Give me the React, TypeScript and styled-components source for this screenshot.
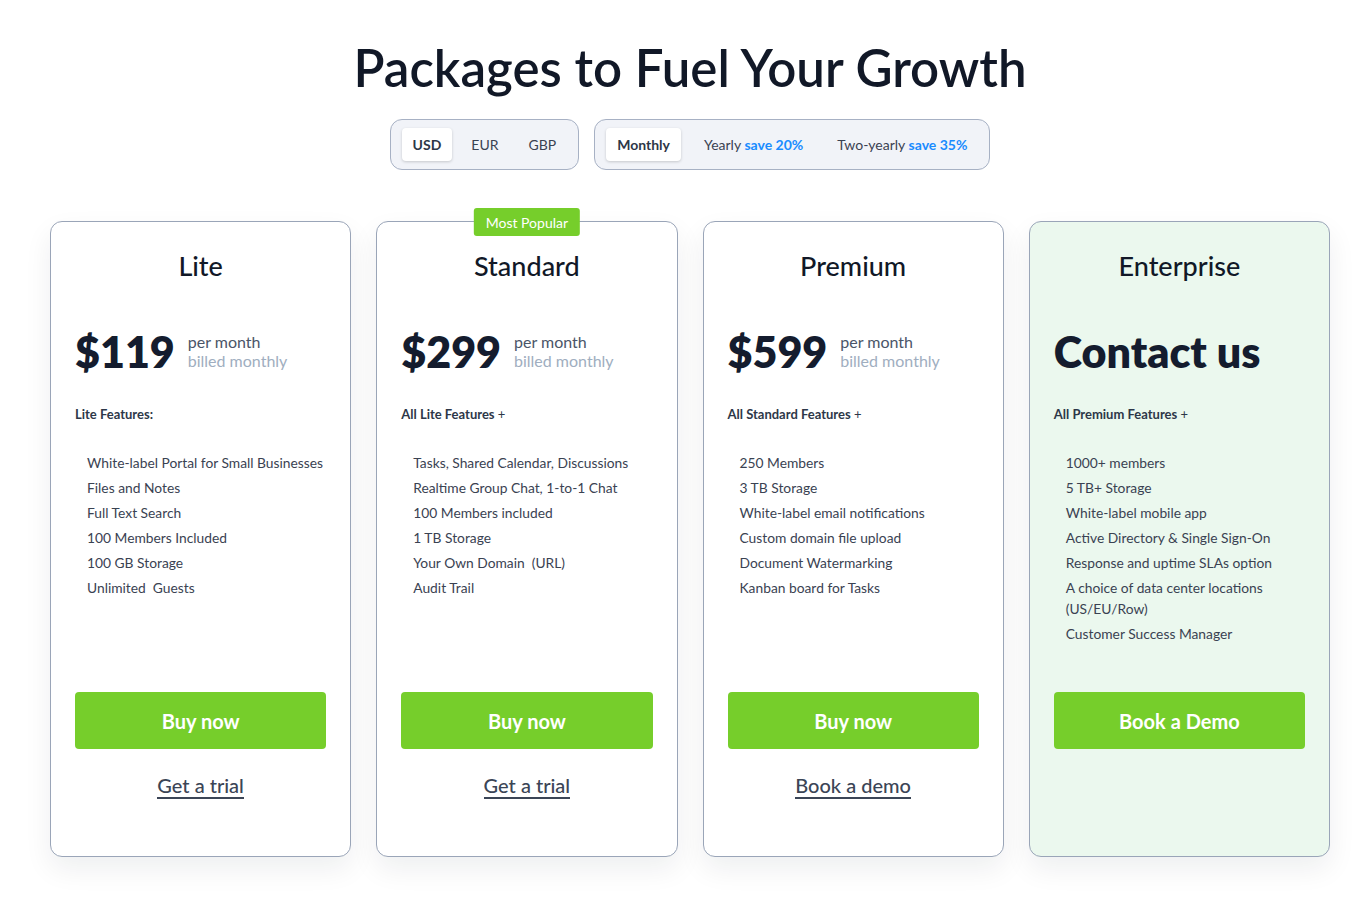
import React from 'react';
import styled, { createGlobalStyle } from 'styled-components';

const GlobalStyle = createGlobalStyle`
	* { box-sizing: border-box; }
	body {
		margin: 0;
		background: #ffffff;
		font-family: Lato, "Noto Sans", sans-serif;
		color: #111827;
	}
`;

const Page = styled.div`
	width: 1280px;
	margin: 0 0 0 50px;
	padding: 37px 0 40px;
	display: flex;
	flex-direction: column;
	align-items: center;
`;

const Heading = styled.h1`
	margin: 0;
	font-size: 51px;
	line-height: 62px;
	font-weight: 600;
	color: #111827;
`;

const Toggles = styled.div`
	display: flex;
	gap: 15px;
	margin-top: 20px;
`;

const ToggleGroup = styled.div<{ $gap: number }>`
	display: flex;
	align-items: center;
	gap: ${({ $gap }) => $gap}px;
	height: 51px;
	padding: 0 11px;
	border: 1px solid #a7b1c4;
	border-radius: 12px;
	background: #f1f3f8;
`;

const ToggleItem = styled.div<{ $active?: boolean }>`
	display: flex;
	align-items: center;
	height: 33px;
	padding: 0 11px;
	border-radius: 4px;
	font-size: 14px;
	font-weight: ${({ $active }) => ($active ? 700 : 400)};
	color: ${({ $active }) => ($active ? '#2d3748' : '#3a4252')};
	background: ${({ $active }) => ($active ? '#ffffff' : 'transparent')};
	box-shadow: ${({ $active }) => ($active ? '0 1px 3px rgba(0,0,0,0.18)' : 'none')};
	white-space: pre;
`;

const Save = styled.span`
	color: #1a8cff;
	font-weight: 700;
`;

const Cards = styled.div`
	display: grid;
	grid-template-columns: repeat(4, 1fr);
	gap: 25px;
	width: 100%;
	margin-top: 51px;
`;

const Card = styled.div<{ $tint?: boolean }>`
	position: relative;
	display: flex;
	flex-direction: column;
	padding: 24px;
	border: 1px solid #9aa5b8;
	border-radius: 12px;
	background: ${({ $tint }) => ($tint ? '#ebf8ee' : '#ffffff')};
	box-shadow: 0 12px 28px rgba(15, 23, 42, 0.07);
`;

const Badge = styled.div`
	position: absolute;
	top: -14px;
	left: 50%;
	transform: translateX(-50%);
	height: 28px;
	padding: 0 12px;
	display: flex;
	align-items: center;
	border-radius: 3px;
	background: #76ce2b;
	color: #ffffff;
	font-size: 14px;
	white-space: nowrap;
`;

const PlanName = styled.h2`
	margin: 0;
	text-align: center;
	font-size: 27px;
	line-height: 40px;
	font-weight: 500;
	color: #111827;
`;

const PriceRow = styled.div`
	display: flex;
	align-items: center;
	gap: 13px;
	height: 44px;
	margin-top: 44px;
`;

const Price = styled.div`
	font-size: 43px;
	font-weight: 800;
	line-height: 44px;
	color: #141c2e;
`;

const Period = styled.div`
	display: flex;
	flex-direction: column;
	font-size: 16px;
	line-height: 19px;
	color: #4a5568;
	margin-top: -3px;
`;

const Billed = styled.span`
	color: #a0aec0;
`;

const FeatureHead = styled.div`
	margin-top: 30px;
	font-size: 13px;
	line-height: 20px;
	font-weight: 700;
	color: #2d3748;
`;

const Plus = styled.span`
	font-weight: 400;
`;

const FeatureList = styled.ul`
	flex: 1;
	list-style: none;
	margin: 28px 0 44px;
	padding: 0 0 0 12px;
`;

const Feature = styled.li`
	font-size: 13.8px;
	line-height: 21px;
	margin-bottom: 4px;
	color: #3a4252;
	white-space: pre-wrap;
`;

const BuyButton = styled.button`
	height: 57px;
	border: none;
	border-radius: 4px;
	background: #76ce2b;
	color: #ffffff;
	font-family: inherit;
	font-size: 20px;
	font-weight: 700;
	cursor: pointer;
`;

const LinkWrap = styled.div`
	display: flex;
	justify-content: center;
	height: 28px;
	margin-top: 22px;
	margin-bottom: 33px;
`;

const TextLink = styled.a`
	font-size: 20px;
	line-height: 28px;
	font-weight: 500;
	color: #3b4556;
	text-decoration: none;
	border-bottom: 2px solid #3b4556;
`;

type Plan = {
	name: string;
	price?: string;
	head: string;
	plus?: boolean;
	features: string[];
	cta: string;
	link?: string;
	popular?: boolean;
	tint?: boolean;
};

const plans: Plan[] = [
	{
		name: 'Lite',
		price: '$119',
		head: 'Lite Features:',
		features: [
			'White-label Portal for Small Businesses',
			'Files and Notes',
			'Full Text Search',
			'100 Members Included',
			'100 GB Storage',
			'Unlimited  Guests',
		],
		cta: 'Buy now',
		link: 'Get a trial',
	},
	{
		name: 'Standard',
		price: '$299',
		head: 'All Lite Features',
		plus: true,
		features: [
			'Tasks, Shared Calendar, Discussions',
			'Realtime Group Chat, 1-to-1 Chat',
			'100 Members included',
			'1 TB Storage',
			'Your Own Domain  (URL)',
			'Audit Trail',
		],
		cta: 'Buy now',
		link: 'Get a trial',
		popular: true,
	},
	{
		name: 'Premium',
		price: '$599',
		head: 'All Standard Features',
		plus: true,
		features: [
			'250 Members',
			'3 TB Storage',
			'White-label email notifications',
			'Custom domain file upload',
			'Document Watermarking',
			'Kanban board for Tasks',
		],
		cta: 'Buy now',
		link: 'Book a demo',
	},
	{
		name: 'Enterprise',
		head: 'All Premium Features',
		plus: true,
		features: [
			'1000+ members',
			'5 TB+ Storage',
			'White-label mobile app',
			'Active Directory & Single Sign-On',
			'Response and uptime SLAs option',
			'A choice of data center locations (US/EU/Row)',
			'Customer Success Manager',
		],
		cta: 'Book a Demo',
		tint: true,
	},
];

export default function App() {
	return (
		<>
			<GlobalStyle />
			<Page>
				<Heading>Packages to Fuel Your Growth</Heading>
				<Toggles>
					<ToggleGroup $gap={8}>
						<ToggleItem $active>USD</ToggleItem>
						<ToggleItem>EUR</ToggleItem>
						<ToggleItem>GBP</ToggleItem>
					</ToggleGroup>
					<ToggleGroup $gap={12}>
						<ToggleItem $active>Monthly</ToggleItem>
						<ToggleItem>
							Yearly <Save>save 20%</Save>
						</ToggleItem>
						<ToggleItem>
							Two-yearly <Save>save 35%</Save>
						</ToggleItem>
					</ToggleGroup>
				</Toggles>
				<Cards>
					{plans.map((plan) => (
						<Card key={plan.name} $tint={plan.tint}>
							{plan.popular && <Badge>Most Popular</Badge>}
							<PlanName>{plan.name}</PlanName>
							<PriceRow>
								{plan.price ? (
									<>
										<Price>{plan.price}</Price>
										<Period>
											<span>per month</span>
											<Billed>billed monthly</Billed>
										</Period>
									</>
								) : (
									<Price>Contact us</Price>
								)}
							</PriceRow>
							<FeatureHead>
								{plan.head}
								{plan.plus && <Plus> +</Plus>}
							</FeatureHead>
							<FeatureList>
								{plan.features.map((f) => (
									<Feature key={f}>{f}</Feature>
								))}
							</FeatureList>
							<BuyButton>{plan.cta}</BuyButton>
							<LinkWrap>{plan.link && <TextLink href="#">{plan.link}</TextLink>}</LinkWrap>
						</Card>
					))}
				</Cards>
			</Page>
		</>
	);
}
